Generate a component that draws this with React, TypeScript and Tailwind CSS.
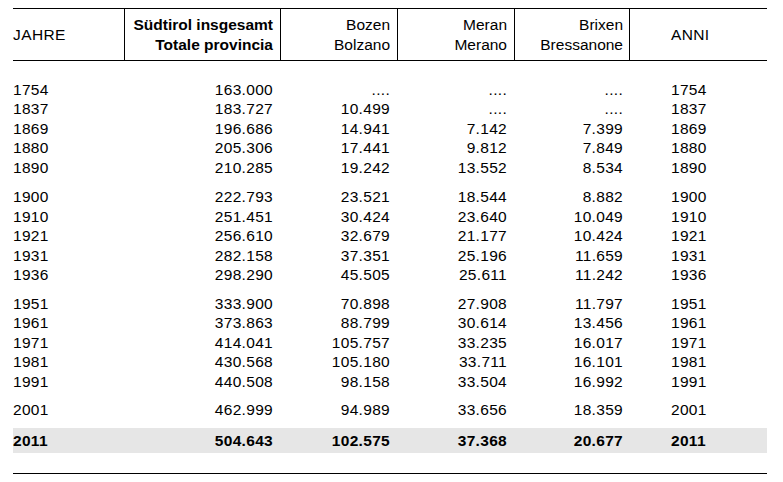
import React from "react";

const cols = "grid grid-cols-[111px_156px_117px_117px_115px_138px]";

type Row = [string, string, string, string, string];

const groups: Row[][] = [
  [
    ["1754", "163.000", "....", "....", "...."],
    ["1837", "183.727", "10.499", "....", "...."],
    ["1869", "196.686", "14.941", "7.142", "7.399"],
    ["1880", "205.306", "17.441", "9.812", "7.849"],
    ["1890", "210.285", "19.242", "13.552", "8.534"],
  ],
  [
    ["1900", "222.793", "23.521", "18.544", "8.882"],
    ["1910", "251.451", "30.424", "23.640", "10.049"],
    ["1921", "256.610", "32.679", "21.177", "10.424"],
    ["1931", "282.158", "37.351", "25.196", "11.659"],
    ["1936", "298.290", "45.505", "25.611", "11.242"],
  ],
  [
    ["1951", "333.900", "70.898", "27.908", "11.797"],
    ["1961", "373.863", "88.799", "30.614", "13.456"],
    ["1971", "414.041", "105.757", "33.235", "16.017"],
    ["1981", "430.568", "105.180", "33.711", "16.101"],
    ["1991", "440.508", "98.158", "33.504", "16.992"],
  ],
  [["2001", "462.999", "94.989", "33.656", "18.359"]],
];

function DataRow({ r, bold = false, h = "h-[19.5px]" }: { r: Row; bold?: boolean; h?: string }) {
  return (
    <div className={`${cols} ${h} items-center tracking-[0.3px] ${bold ? "font-bold" : ""}`}>
      <div>{r[0]}</div>
      <div className="text-right pr-[7px]">{r[1]}</div>
      <div className="text-right pr-[7px]">{r[2]}</div>
      <div className="text-right pr-[7px]">{r[3]}</div>
      <div className="text-right pr-[6px]">{r[4]}</div>
      <div className="pl-[42px]">{r[0]}</div>
    </div>
  );
}

export default function App() {
  const gaps = ["mt-[18.7px]", "mt-[10px]", "mt-[9px]", "mt-[8.5px]"];
  return (
    <div
      className="w-[783px] h-[482px] bg-white text-black text-[15.5px] leading-[19.5px]"
      style={{ fontFamily: '"Liberation Sans", Arial, sans-serif' }}
    >
      <div className="pt-[8px] pl-[13px] w-[767px]">
        <div className={`${cols} border-t border-b border-black h-[53px]`}>
          <div className="flex items-center tracking-[0.4px]">JAHRE</div>
          <div className="border-l border-black flex flex-col justify-center items-end pr-[7px] font-bold">
            <span>Südtirol insgesamt</span>
            <span>Totale provincia</span>
          </div>
          <div className="border-l border-black flex flex-col justify-center items-end pr-[7px]">
            <span>Bozen</span>
            <span>Bolzano</span>
          </div>
          <div className="border-l border-black flex flex-col justify-center items-end pr-[7px]">
            <span>Meran</span>
            <span>Merano</span>
          </div>
          <div className="border-l border-black flex flex-col justify-center items-end pr-[6px]">
            <span>Brixen</span>
            <span>Bressanone</span>
          </div>
          <div className="border-l border-black flex items-center pl-[41px] tracking-[0.3px]">ANNI</div>
        </div>
        {groups.map((g, i) => (
          <div key={i} className={gaps[i]}>
            {g.map((r) => (
              <DataRow key={r[0]} r={r} />
            ))}
          </div>
        ))}
        <div className="mt-[9px] bg-[#e6e6e6]">
          <DataRow r={["2011", "504.643", "102.575", "37.368", "20.677"]} bold h="h-[25px]" />
        </div>
        <div className="mt-[20px] border-t border-black" />
      </div>
    </div>
  );
}
